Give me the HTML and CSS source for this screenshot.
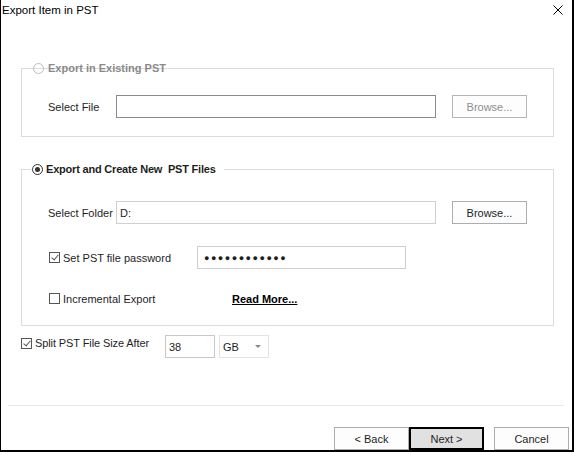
FILE: index.html
```html
<!DOCTYPE html>
<html>
<head>
<meta charset="utf-8">
<title>Export Item in PST</title>
<link rel="stylesheet" href="styles.css">
</head>
<body>
<div class="window">
  <div class="titlebar">
    <span class="title">Export Item in PST</span>
    <svg class="close" width="10" height="10" viewBox="0 0 10 10"><path d="M0.5 0.5 L9.5 9.5 M9.5 0.5 L0.5 9.5" stroke="#000" stroke-width="1" fill="none"/></svg>
  </div>

  <section class="group g1">
    <div class="legend legend-disabled">
      <span class="radio radio-disabled"></span>
      <span class="legend-text">Export in Existing PST</span>
    </div>
    <div class="row">
      <span class="lbl">Select File</span>
      <div class="input input-dark w320"></div>
      <div class="btn btn-disabled browse">Browse...</div>
    </div>
  </section>

  <section class="group g2">
    <div class="legend legend-active">
      <span class="radio radio-on"></span>
      <span class="legend-text">Export and Create New&nbsp; PST Files</span>
    </div>
    <div class="row">
      <span class="lbl">Select Folder</span>
      <div class="input w320"><span class="val">D:</span></div>
      <div class="btn browse">Browse...</div>
    </div>
    <div class="row row-pass">
      <span class="chk-col"><span class="check on"></span><span>Set PST file password</span></span>
      <div class="input w209"><span class="dots">●●●●●●●●●●●●</span></div>
    </div>
    <div class="row row-inc">
      <span class="chk-col wide"><span class="check"></span><span>Incremental Export</span></span>
      <a class="readmore">Read More...</a>
    </div>
  </section>

  <div class="split-row">
    <span class="split-lbl"><span class="check on"></span><span>Split PST File Size After</span></span>
    <div class="input w50"><span class="val">38</span></div>
    <div class="dropdown"><span>GB</span><span class="arrow"></span></div>
  </div>

  <div class="sep"></div>

  <div class="footer">
    <div class="btn fbtn">&lt; Back</div>
    <div class="btn fbtn default">Next &gt;</div>
    <div class="btn fbtn cancel">Cancel</div>
  </div>
</div>
</body>
</html>
```

FILE: styles.css
```css
* { box-sizing: border-box; }
html, body { margin: 0; padding: 0; background: #fff; }
body {
  font-family: "Liberation Sans", Arial, sans-serif;
  font-size: 11px;
  color: #1e1e1e;
}
.window {
  width: 574px;
  height: 452px;
  background: #fff;
  border-left: 1px solid #000;
  border-right: 2px solid #000;
  border-bottom: 2px solid #000;
  display: flex;
  flex-direction: column;
}
.titlebar {
  height: 20px;
  display: flex;
  align-items: flex-start;
  justify-content: space-between;
  padding: 3px 0 0 1px;
}
.title { font-size: 11.5px; color: #000; line-height: 14px; }
.close { margin: 2px 9px 0 0; }

.group {
  position: relative;
  margin-left: 20px;
  width: 533px;
  border: 1px solid #dcdcdc;
}
.g1 { margin-top: 48px; height: 69px; padding: 26px 0 0 26px; }
.g2 { margin-top: 32px; height: 157px; padding: 31px 0 0 26px; }

.legend {
  position: absolute;
  top: -7px;
  height: 13px;
  display: flex;
  align-items: center;
  font-weight: bold;
  line-height: 13px;
}
.legend-disabled { left: 11px; color: #8a8a8a; gap: 4px; }
.legend-active { left: 9px; background: #fff; padding: 0 8px 0 1px; color: #1e1e1e; gap: 3px; letter-spacing: -0.2px; }

.radio {
  width: 11px; height: 11px;
  border-radius: 50%;
  border: 1px solid #333;
  background: #fff;
  display: inline-block;
  position: relative;
  flex: none;
}
.radio-disabled { border-color: #bcbcbc; background: transparent; }
.radio-on::after {
  content: "";
  position: absolute;
  left: 2px; top: 2px;
  width: 5px; height: 5px;
  border-radius: 50%;
  background: #333;
}

.row { display: flex; align-items: center; height: 23px; }
.lbl { width: 68px; flex: none; }
.input {
  height: 23px;
  border: 1px solid #cfcfcf;
  background: #fff;
  display: flex;
  align-items: center;
  flex: none;
}
.input-dark { border-color: #8a8a8a; }
.w320 { width: 320px; }
.w209 { width: 209px; }
.w50 { width: 50px; }
.val { padding-left: 3px; color: #1e1e1e; }
.dots { padding-left: 6px; font-size: 9px; letter-spacing: 1.5px; color: #1e1e1e; }

.btn {
  height: 23px;
  width: 75px;
  border: 1px solid #adadad;
  background: #fdfdfd;
  display: flex;
  align-items: center;
  justify-content: center;
  color: #1e1e1e;
  flex: none;
}
.btn-disabled { color: #8d8d8d; border-color: #b5b5b5; }
.browse { margin-left: 16px; }

.row-pass { margin-top: 22px; padding-left: 1px; }
.row-inc { margin-top: 18px; padding-left: 1px; }
.chk-col { width: 148px; display: flex; align-items: center; gap: 3px; flex: none; }
.chk-col.wide { width: 183px; }

.check {
  width: 11px; height: 11px;
  border: 1px solid #555;
  background: #fff;
  display: inline-block;
  position: relative;
  flex: none;
}
.check.on::after {
  content: "";
  position: absolute;
  left: 3px; top: 0px;
  width: 3px; height: 6px;
  border-right: 1px solid #555;
  border-bottom: 1px solid #555;
  transform: rotate(40deg);
}

.readmore { font-weight: bold; text-decoration: underline; color: #000; }

.split-row {
  margin: 9px 0 0 20px;
  height: 23px;
  display: flex;
  align-items: flex-start;
}
.split-lbl { width: 144px; margin-top: 2px; display: flex; align-items: center; gap: 3px; flex: none; letter-spacing: -0.1px; }
.split-row .input { border-color: #c8c8c8; }
.dropdown {
  margin-left: 4px;
  width: 50px;
  height: 23px;
  border: 1px solid #e3e3e3;
  display: flex;
  align-items: center;
  justify-content: space-between;
  padding: 0 7px 0 3px;
}
.arrow {
  width: 0; height: 0;
  border-left: 3px solid transparent;
  border-right: 3px solid transparent;
  border-top: 3px solid #888;
}

.sep {
  margin: 47px 0 0 7px;
  width: 556px;
  height: 1px;
  background: #e8e8e8;
}
.footer {
  margin-top: 21px;
  display: flex;
  justify-content: flex-end;
  padding-right: 3px;
}
.fbtn { width: 75px; }
.default { border: 2px solid #000; background: #e1e1e1; }
.cancel { margin-left: 10px; }
```
